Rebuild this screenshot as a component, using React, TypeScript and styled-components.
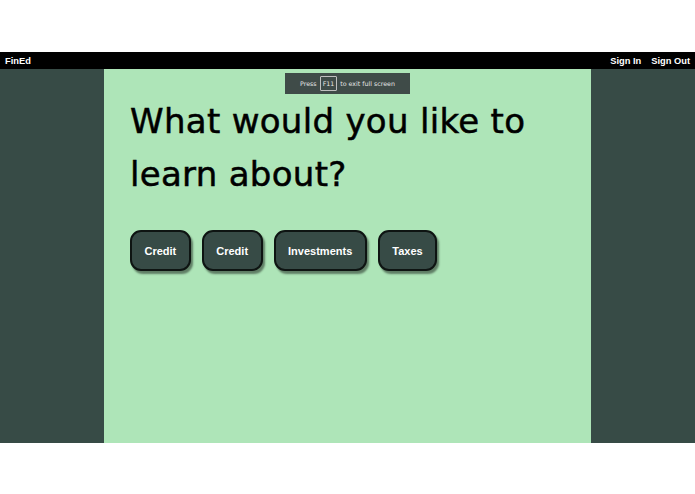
import React from "react";
import styled, { createGlobalStyle } from "styled-components";

const Global = createGlobalStyle`
  html, body { margin: 0; padding: 0; background: #ffffff; }
  body { font-family: "Liberation Sans", Arial, sans-serif; }
`;

const Page = styled.div`
  padding-top: 52px;
  display: flex;
  flex-direction: column;
`;

const NavBar = styled.nav`
  height: 17px;
  background: #000000;
  display: flex;
  align-items: center;
  justify-content: space-between;
  padding: 0 5px;
  color: #ffffff;
  font-family: "Liberation Sans", Arial, sans-serif;
  font-weight: 700;
  font-size: 9.3px;
`;

const NavLinks = styled.div`
  display: flex;
  gap: 10px;
`;

const NavLink = styled.span`
  color: #ffffff;
`;

const Main = styled.main`
  height: 374px;
  background: #374b46;
  display: flex;
  justify-content: center;
`;

const Panel = styled.section`
  position: relative;
  width: 487px;
  background: #aee5b8;
  padding: 26px 26px 0 26px;
  box-sizing: border-box;
`;

const Notice = styled.div`
  position: absolute;
  top: 4px;
  left: 181px;
  width: 125px;
  height: 21px;
  background: #3f4b48;
  color: #e6e6e6;
  font-family: "DejaVu Sans", sans-serif;
  font-size: 6.3px;
  display: flex;
  align-items: center;
  justify-content: center;
  gap: 3px;
`;

const Key = styled.span`
  border: 1px solid #bfbfbf;
  padding: 3px 2px;
  border-radius: 1px;
`;

const Heading = styled.h1`
  margin: 0;
  font-family: "DejaVu Sans", Verdana, sans-serif;
  font-weight: 400;
  font-size: 34px;
  line-height: 53px;
  color: #000000;
  letter-spacing: 0.3px;
  -webkit-text-stroke: 0.5px #000000;
`;

const Topics = styled.div`
  display: flex;
  gap: 11px;
  margin-top: 29px;
`;

const Topic = styled.button`
  height: 41px;
  padding: 0 12.5px;
  background: #374b46;
  color: #ffffff;
  border: 2px solid #0e1412;
  border-radius: 11px;
  box-shadow: 2px 3px 2px rgba(0, 0, 0, 0.45);
  font-family: "Liberation Sans", Arial, sans-serif;
  font-weight: 700;
  font-size: 11px;
  cursor: pointer;
`;

const topics = ["Credit", "Credit", "Investments", "Taxes"];

export default function App() {
  return (
    <>
      <Global />
      <Page>
        <NavBar>
          <span>FinEd</span>
          <NavLinks>
            <NavLink>Sign In</NavLink>
            <NavLink>Sign Out</NavLink>
          </NavLinks>
        </NavBar>
        <Main>
          <Panel>
            <Notice>
              Press <Key>F11</Key> to exit full screen
            </Notice>
            <Heading>
              What would you like to
              <br />
              learn about?
            </Heading>
            <Topics>
              {topics.map((t, i) => (
                <Topic key={i}>{t}</Topic>
              ))}
            </Topics>
          </Panel>
        </Main>
      </Page>
    </>
  );
}
